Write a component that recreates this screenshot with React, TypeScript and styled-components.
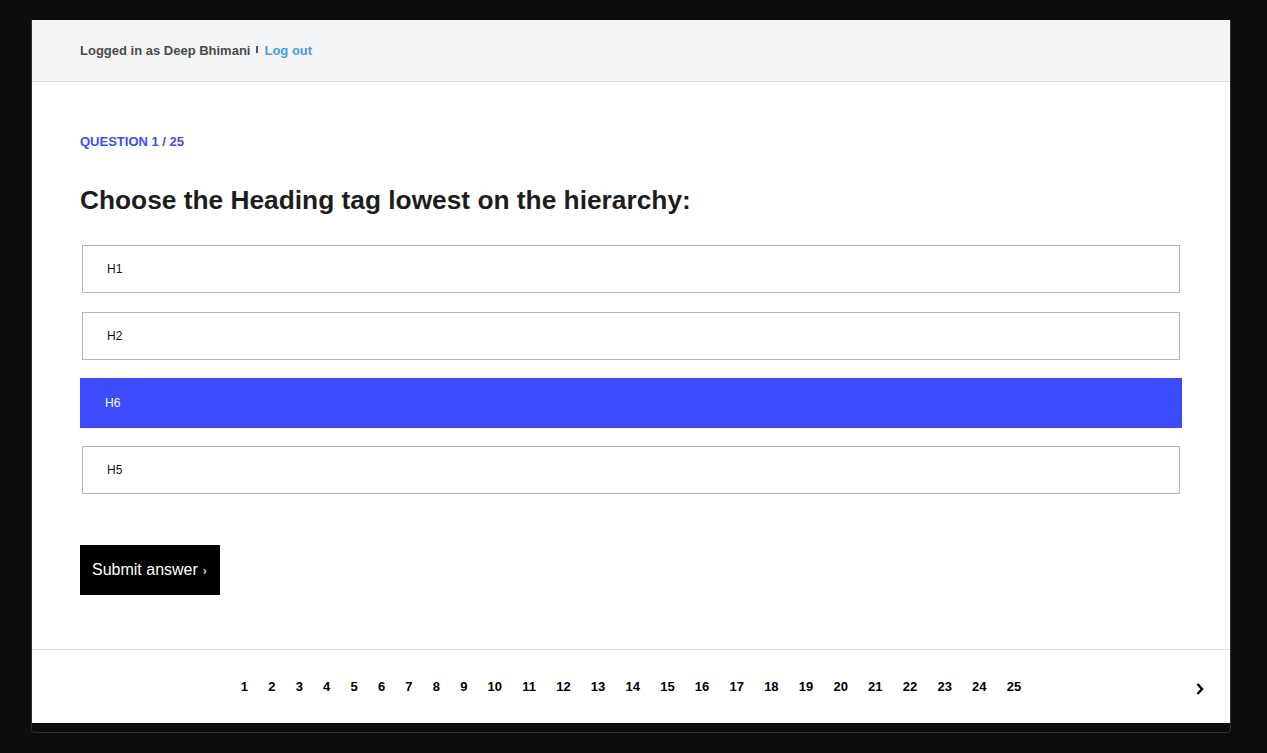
import React from "react";
import styled, { createGlobalStyle } from "styled-components";

const GlobalStyle = createGlobalStyle`
  html, body {
    margin: 0;
    padding: 0;
    background: #0d0d0d;
  }
  body {
    font-family: "Liberation Sans", Arial, Helvetica, sans-serif;
  }
  * { box-sizing: border-box; }
`;

const Frame = styled.div`
  margin: 20px 0 0 31px;
  width: 1200px;
  height: 713px;
  border: 1px solid #2f2f2f;
  border-top: none;
  border-radius: 0 0 4px 4px;
  background: #0d0d0d;
`;

const Card = styled.div`
  height: 703px;
  background: #ffffff;
  display: flex;
  flex-direction: column;
`;

const Header = styled.header`
  height: 62px;
  flex: none;
  background: #f4f5f7;
  border-bottom: 1px solid #d9d9d9;
  display: flex;
  align-items: center;
  padding: 0 48px 1px;
  font-size: 13px;
  font-weight: 700;
  color: #4a4a4a;
`;

const Divider = styled.span`
  display: inline-block;
  width: 2px;
  height: 7px;
  margin: 0 6px 1px;
  background: #555555;
`;

const LogOut = styled.a`
  color: #3ea0ee;
  text-decoration: none;
  cursor: pointer;
`;

const Main = styled.main`
  flex: 1;
  padding: 52px 48px 0;
  display: flex;
  flex-direction: column;
  align-items: flex-start;
`;

const Label = styled.div`
  font-size: 13px;
  line-height: 16px;
  font-weight: 700;
  color: #3d4bff;
  text-transform: uppercase;
`;

const Title = styled.h1`
  margin: 35px 0 0;
  font-size: 26.3px;
  line-height: 30px;
  font-weight: 700;
  color: #1d1d1d;
`;

const Options = styled.div`
  margin-top: 29px;
  width: 100%;
  display: flex;
  flex-direction: column;
  gap: 17px;
`;

const Option = styled.div<{ $selected?: boolean }>`
  height: ${(p) => (p.$selected ? "50px" : "48px")};
  margin: ${(p) => (p.$selected ? "0" : "1px 2px")};
  display: flex;
  align-items: center;
  padding-left: 24px;
  font-size: 12px;
  color: ${(p) => (p.$selected ? "#ffffff" : "#111111")};
  background: ${(p) => (p.$selected ? "#3d4bff" : "#ffffff")};
  border: 1px solid ${(p) => (p.$selected ? "#3d4bff" : "#b5b5b5")};
  cursor: pointer;
`;

const Submit = styled.button`
  margin-top: 50px;
  width: 140px;
  height: 50px;
  padding: 0 0 0 12px;
  border: none;
  background: #000000;
  color: #ffffff;
  font-family: inherit;
  font-size: 16px;
  text-align: left;
  display: flex;
  align-items: center;
  cursor: pointer;
`;

const Arrow = styled.span`
  font-size: 12px;
  margin-left: 5px;
  margin-top: 1px;
`;

const Footer = styled.footer`
  height: 74px;
  flex: none;
  border-top: 1px solid #e1e1e1;
  display: grid;
  grid-template-columns: 1fr auto 1fr;
  align-items: center;
`;

const Pages = styled.nav`
  grid-column: 2;
  display: flex;
  gap: 20.2px;
  font-size: 13px;
  font-weight: 700;
  color: #000000;
`;

const PageLink = styled.span`
  cursor: pointer;
`;

const Next = styled.span`
  grid-column: 3;
  justify-self: end;
  margin-right: 26px;
  margin-top: 5px;
  display: flex;
  cursor: pointer;
`;

const options = ["H1", "H2", "H6", "H5"];

export default function App() {
  return (
    <>
      <GlobalStyle />
      <Frame>
        <Card>
          <Header>
            Logged in as Deep Bhimani
            <Divider />
            <LogOut>Log out</LogOut>
          </Header>
          <Main>
            <Label>Question 1 / 25</Label>
            <Title>Choose the Heading tag lowest on the hierarchy:</Title>
            <Options>
              {options.map((o) => (
                <Option key={o} $selected={o === "H6"}>
                  {o}
                </Option>
              ))}
            </Options>
            <Submit>
              Submit answer<Arrow>›</Arrow>
            </Submit>
          </Main>
          <Footer>
            <Pages>
              {Array.from({ length: 25 }, (_, i) => (
                <PageLink key={i}>{i + 1}</PageLink>
              ))}
            </Pages>
            <Next>
              <svg width="8" height="12" viewBox="0 0 8 12">
                <polyline
                  points="1.5,1 6,6 1.5,11"
                  fill="none"
                  stroke="#000"
                  strokeWidth="2.4"
                />
              </svg>
            </Next>
          </Footer>
        </Card>
      </Frame>
    </>
  );
}
